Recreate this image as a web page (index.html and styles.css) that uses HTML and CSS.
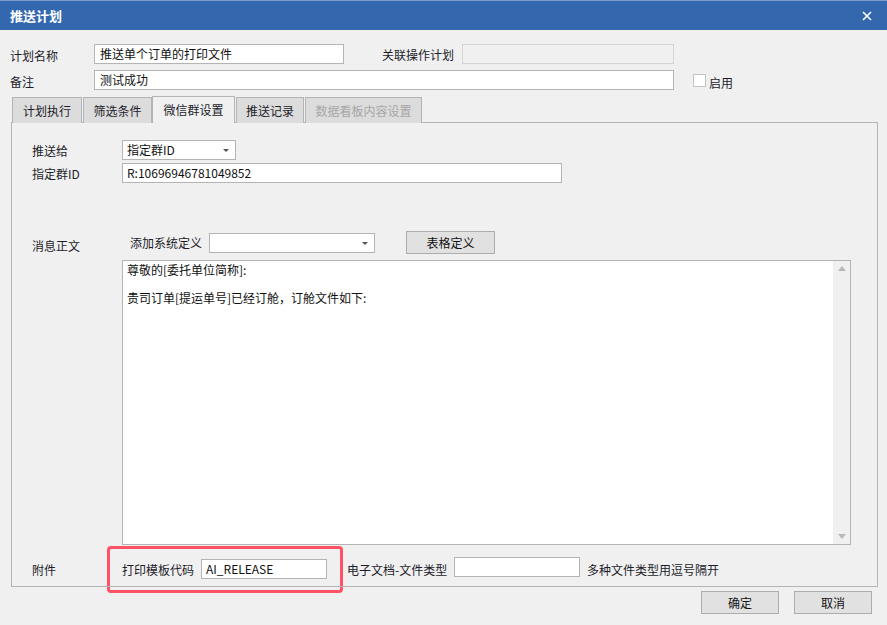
FILE: index.html
```html
<!DOCTYPE html>
<html lang="zh">
<head>
<meta charset="utf-8">
<title>推送计划</title>
<link rel="stylesheet" href="styles.css">
</head>
<body>
<div class="window">
  <div class="titlebar">
    <span class="title">推送计划</span>
    <svg class="close" width="10" height="10" viewBox="0 0 10 10"><path d="M1 1 L9 9 M9 1 L1 9" stroke="#fff" stroke-width="1.6" fill="none"/></svg>
  </div>
  <div class="content">
    <div class="row row1">
      <span class="lbl">计划名称</span>
      <div class="input w-name">推送单个订单的打印文件</div>
      <span class="lbl2">关联操作计划</span>
      <div class="input disabled w-rel"></div>
    </div>
    <div class="row row2">
      <span class="lbl">备注</span>
      <div class="input w-note">测试成功</div>
      <span class="check"></span><span class="check-lbl">启用</span>
    </div>
    <div class="tabs">
      <div class="tab t1">计划执行</div>
      <div class="tab t2">筛选条件</div>
      <div class="tab t3 active">微信群设置</div>
      <div class="tab t4">推送记录</div>
      <div class="tab t5 disabled-tab">数据看板内容设置</div>
    </div>
    <div class="panel">
      <div class="prow prow1">
        <span class="plbl">推送给</span>
        <div class="input select w-target">指定群ID<span class="arrow"></span></div>
      </div>
      <div class="prow prow2">
        <span class="plbl">指定群ID</span>
        <div class="input w-gid">R:10696946781049852</div>
      </div>
      <div class="prow prow3">
        <span class="plbl msg">消息正文</span>
        <span class="sys">添加系统定义</span>
        <div class="input select w-sys"><span class="arrow"></span></div>
        <div class="btn w-tbl">表格定义</div>
      </div>
      <div class="textarea">
        <div class="ta-text">
          <div>尊敬的[委托单位简称]:</div>
          <div>&nbsp;</div>
          <div>贵司订单[提运单号]已经订舱，订舱文件如下:</div>
        </div>
        <div class="scrollbar">
          <span class="sb-up"></span>
          <span class="sb-down"></span>
        </div>
      </div>
      <div class="prow prow4">
        <span class="plbl att">附件</span>
        <span class="att-lbl">打印模板代码</span>
        <div class="input w-code">AI_RELEASE</div>
        <span class="att-lbl2">电子文档-文件类型</span>
        <div class="input w-type"></div>
        <span class="att-lbl3">多种文件类型用逗号隔开</span>
      </div>
    </div>
    <div class="buttons">
      <div class="btn bbtn">确定</div>
      <div class="btn bbtn">取消</div>
    </div>
  </div>
  <div class="highlight"></div>
</div>
</body>
</html>
```
FILE: styles.css
```css
* { box-sizing: border-box; }
html, body { margin: 0; padding: 0; }
body {
  width: 887px;
  height: 625px;
  overflow: hidden;
  background: #f0f0f0;
  font-family: "Noto Sans CJK SC", "Microsoft YaHei", sans-serif;
  font-size: 12px;
  color: #1c1c2a;
}
.window { position: relative; width: 887px; height: 625px; }
.titlebar {
  height: 30px;
  background: #3468ae;
  border-top: 1px solid #7a9ccc;
  display: flex;
  align-items: center;
  justify-content: space-between;
  padding: 0 15px 0 10px;
}
.title { color: #fff; font-weight: bold; font-size: 13px; }
.close { display: block; }
.content { padding: 0 0 0 10px; }
.row { display: flex; align-items: center; height: 20px; }
.row1 { margin-top: 14px; }
.row2 { margin-top: 6px; }
.lbl { width: 84px; line-height: 20px; padding-top: 4px; }
.lbl2 { margin-left: 38px; width: 80px; }
.input {
  height: 20px;
  background: #fff;
  border: 1px solid #b4b4b4;
  padding: 0 5px;
  line-height: 18px;
  color: #111;
  white-space: nowrap;
  position: relative;
  flex-shrink: 0;
}
.input.disabled { background: #f0f0f0; border-color: #d4d4d4; }
.w-name { width: 250px; }
.w-rel { width: 212px; }
.w-note { width: 580px; }
.check {
  width: 13px; height: 13px;
  margin-left: 19px;
  background: #fff;
  border: 1px solid #c4c4c4;
}
.check-lbl { margin-left: 3px; padding-top: 4px; }
.tabs { display: flex; margin-top: 7px; padding-left: 2px; height: 26px; position: relative; z-index: 2; align-items: flex-end; }
.tab {
  height: 26px;
  background: #dcdcdc;
  border: 1px solid #b4b4b4;
  border-bottom: none;
  text-align: center;
  line-height: 25px;
  color: #1c1c2a;
  flex-shrink: 0;
}
.tab.active { background: #f0f0f0; height: 27px; position: relative; z-index: 3; }
.t1 { width: 70px; margin-right: 1px; }
.t2 { width: 69px; margin-right: 0; }
.t3 { width: 83px; margin-right: 1px; }
.t4 { width: 68px; margin-right: 1px; }
.t5 { width: 117px; }
.disabled-tab { color: #a6a6a6; }
.panel {
  margin-left: 1px;
  margin-top: -1px;
  width: 867px;
  height: 465px;
  border: 1px solid #b4b4b4;
  position: relative;
  z-index: 1;
}
.prow { display: flex; align-items: center; padding-left: 20px; }
.plbl { width: 90px; flex-shrink: 0; }
.prow1 { margin-top: 17px; height: 20px; }
.prow2 { margin-top: 3px; height: 20px; }
.select { padding-left: 4px; }
.arrow {
  position: absolute;
  right: 6px; top: 8px;
  width: 0; height: 0;
  border-left: 3px solid transparent;
  border-right: 3px solid transparent;
  border-top: 3px solid #555;
}
.w-target { width: 114px; }
.w-gid { width: 440px; padding-left: 4px; }
.prow3 { margin-top: 48px; height: 23px; }
.msg { padding-top: 6px; }
.sys { margin-left: 8px; width: 72px; flex-shrink: 0; white-space: nowrap; }
.w-sys { width: 166px; margin-left: 7px; }
.btn {
  background: #e1e1e1;
  border: 1px solid #adadad;
  text-align: center;
  line-height: 21px;
  height: 23px;
  color: #111;
  flex-shrink: 0;
}
.w-tbl { width: 89px; margin-left: 31px; }
.textarea {
  margin-top: 6px;
  margin-left: 110px;
  width: 729px;
  height: 285px;
  background: #fff;
  border: 1px solid #b4b4b4;
  position: relative;
}
.ta-text { padding: 2px 0 0 4px; line-height: 14px; color: #111; }
.scrollbar {
  position: absolute;
  right: 0; top: 0; bottom: 0;
  width: 17px;
  background: #f0f0f0;
}
.sb-up, .sb-down {
  position: absolute;
  left: 5px;
  width: 0; height: 0;
  border-left: 4px solid transparent;
  border-right: 4px solid transparent;
}
.sb-up { top: 5px; border-bottom: 5px solid #b8b8b8; }
.sb-down { bottom: 5px; border-top: 5px solid #b8b8b8; }
.prow4 { margin-top: 12px; height: 22px; align-items: flex-start; }
.prow4 > span { line-height: 20px; margin-top: 3px; white-space: nowrap; flex-shrink: 0; }
.att-lbl { width: 72px; }
.w-code { width: 126px; margin-left: 7px; margin-top: 2px; padding-left: 4px; }
.att-lbl2 { margin-left: 20px; width: 100px; }
.w-type { width: 126px; margin-left: 7px; }
.att-lbl3 { margin-left: 7px; }
.buttons { display: flex; justify-content: flex-end; gap: 15px; margin-top: 4px; padding-right: 15px; }
.bbtn { width: 78px; }
.highlight {
  position: absolute;
  left: 107px; top: 546px;
  width: 236px; height: 47px;
  border: 3px solid #ff5266;
  border-radius: 4px;
}
```
